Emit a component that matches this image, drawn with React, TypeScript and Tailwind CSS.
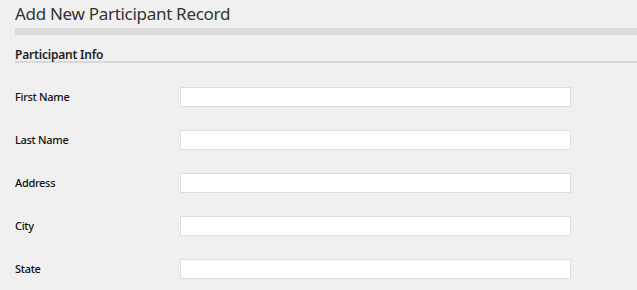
import React from "react";

const fields = ["First Name", "Last Name", "Address", "City", "State"];

export default function App() {
  return (
    <div className="w-[637px] h-[290px] overflow-hidden bg-[#f0f0f0] text-[#222]" style={{ fontFamily: '"Noto Sans", "Open Sans", sans-serif' }}>
      <div className="pl-[15px]">
        <h1 className="pt-[2px] text-[17px] leading-[24px] tracking-[-0.3px] text-[#333] font-normal">Add New Participant Record</h1>
        <div className="mt-[2px] h-[7px] bg-[#dcdcdc]" />
        <div className="mt-[14px] border-b-2 border-[#d8d8d8]">
          <h2 className="text-[12px] leading-[12px] tracking-[-0.2px] font-semibold text-[#222]">Participant Info</h2>
        </div>
        <div className="mt-[24px] flex flex-col gap-[23px]">
          {fields.map((f) => (
            <div key={f} className="flex items-center">
              <label className="w-[165px] text-[11px] tracking-[-0.3px] font-medium text-[#111]">{f}</label>
              <input type="text" className="w-[391px] h-[20px] bg-white border border-[#dedede] outline-none" />
            </div>
          ))}
        </div>
      </div>
    </div>
  );
}
